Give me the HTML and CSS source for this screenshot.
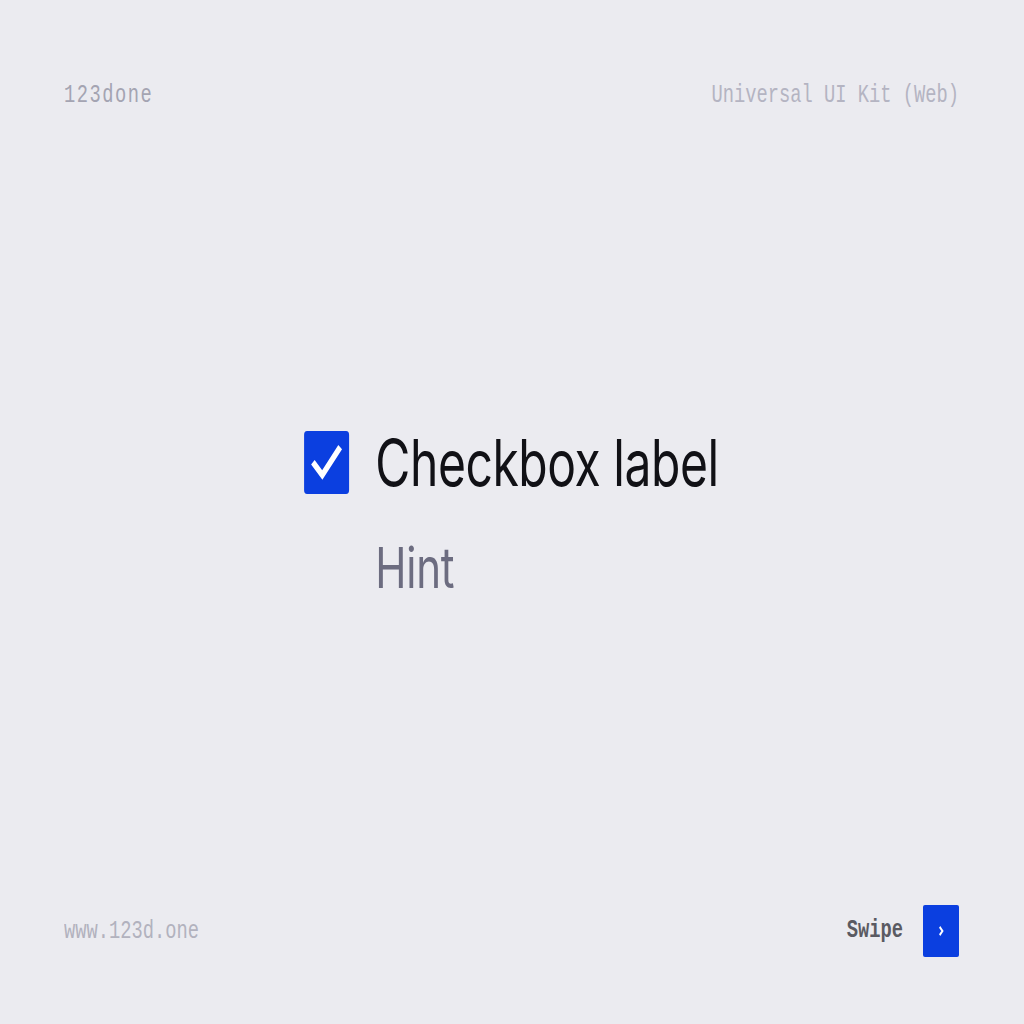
FILE: index.html
```html
<!DOCTYPE html>
<html lang="en">
<head>
<meta charset="utf-8">
<title>Checkbox – Universal UI Kit</title>
<link rel="stylesheet" href="styles.css">
</head>
<body>
<div class="stage">
  <header class="bar">
    <span class="mono brand">123done</span>
    <span class="mono kit">Universal UI Kit (Web)</span>
  </header>
  <main class="main">
    <div class="field">
      <span class="box">
        <svg viewBox="0 0 24 24" width="60" height="63" aria-hidden="true">
          <path d="M5.6 12.8 L9.7 17 L18.4 6.8" fill="none" stroke="#fff" stroke-width="2.6" stroke-linecap="square" stroke-linejoin="miter"/>
        </svg>
      </span>
      <span class="label">Checkbox label</span>
      <span class="hint">Hint</span>
    </div>
  </main>
  <footer class="bar">
    <span class="mono site">www.123d.one</span>
    <span class="swipe">
      <span class="mono swipe-text">Swipe</span>
      <span class="next">
        <svg viewBox="0 0 24 24" width="16" height="22" aria-hidden="true" preserveAspectRatio="none">
          <path d="M10 7.5 L14.2 12 L10 16.5" fill="none" stroke="#fff" stroke-width="2.6"/>
        </svg>
      </span>
    </span>
  </footer>
</div>
</body>
</html>
```
FILE: styles.css
```css
html, body {
  margin: 0;
  padding: 0;
  background: #ebebf0;
}
.stage {
  width: 1024px;
  height: 1024px;
  display: flex;
  flex-direction: column;
  padding: 0 65px 0 64px;
  box-sizing: border-box;
}
.bar {
  height: 188px;
  padding-top: 4px;
  box-sizing: border-box;
  flex: none;
  display: flex;
  align-items: center;
  justify-content: space-between;
}
.mono {
  display: inline-block;
  font-family: "Liberation Mono", "DejaVu Sans Mono", monospace;
  font-size: 25px;
  line-height: 30px;
  transform: scaleX(0.75);
  transform-origin: 0 50%;
}
.brand {
  color: #a4a4b2;
  letter-spacing: 2px;
}
.kit {
  color: #b4b4c2;
  transform-origin: 100% 50%;
}
.site {
  color: #b2b2be;
}
.swipe {
  display: flex;
  align-items: center;
  gap: 20px;
  margin-top: -2px;
}
.swipe-text {
  color: #5a5a62;
  font-weight: bold;
  transform-origin: 100% 50%;
}
.next {
  width: 36px;
  height: 52px;
  background: #0b3fe0;
  border-radius: 2px;
  display: flex;
  align-items: center;
  justify-content: center;
}
.next svg {
  display: block;
}
.main {
  flex: 1;
  display: flex;
  align-items: center;
  justify-content: center;
  padding-top: 2px;
}
.field {
  display: grid;
  grid-template-columns: 60px auto;
  column-gap: 35px;
  row-gap: 45px;
  align-items: center;
  font-family: Inter, "Liberation Sans", sans-serif;
  transform: scaleX(0.75);
  transform-origin: 50% 50%;
}
.box {
  width: 60px;
  height: 63px;
  background: #0b3fe0;
  border-radius: 4px;
  display: block;
}
.box svg {
  display: block;
}
.label {
  font-size: 64px;
  line-height: 64px;
  letter-spacing: -0.6px;
  color: #111116;
}
.hint {
  grid-column: 2;
  font-size: 56px;
  line-height: 56px;
  letter-spacing: -0.3px;
  color: #6c6c80;
}
```
